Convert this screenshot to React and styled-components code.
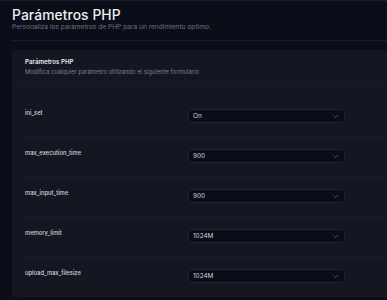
import React from 'react';
import styled, { createGlobalStyle } from 'styled-components';

const GlobalStyle = createGlobalStyle`
  html, body {
    margin: 0;
    padding: 0;
    background: #0b0d18;
    font-family: Inter, "Noto Sans", sans-serif;
    overflow: hidden;
  }
`;

const Page = styled.div`
  width: 387px;
  height: 300px;
  border-top: 1px solid #1b1e2b;
  padding-left: 12px;
  box-sizing: border-box;
  overflow: hidden;
`;

const Header = styled.div`
  padding-top: 6px;
`;

const Title = styled.h1`
  margin: 0;
  font-size: 13.8px;
  line-height: 16px;
  font-weight: 500;
  letter-spacing: 0.1px;
  color: #eef0f5;
`;

const Subtitle = styled.p`
  margin: 0;
  font-size: 6.6px;
  line-height: 9px;
  color: #6c7184;
`;

const Divider = styled.div`
  margin-top: 8px;
  border-top: 1px solid #1a1d29;
`;

const Card = styled.section`
  margin-top: 9px;
  width: 420px;
  background: #141722;
  border-radius: 4px 0 0 0;
`;

const CardHeader = styled.div`
  padding: 7px 13px 6px;
  border-bottom: 1px solid #191c28;
`;

const CardTitle = styled.h2`
  margin: 0;
  font-size: 6.2px;
  line-height: 9px;
  font-weight: 600;
  color: #e6e8ee;
`;

const CardText = styled.p`
  margin: 1px 0 0;
  font-size: 5.9px;
  line-height: 9px;
  color: #7a7f91;
`;

const CardBody = styled.div`
  padding: 14px 0 0 12px;
`;

const Row = styled.div`
  display: flex;
  align-items: flex-start;
  height: 40px;
  padding-top: 12px;
  box-sizing: border-box;
  border-bottom: 1px solid #191c28;
`;

const Label = styled.label`
  width: 163px;
  padding-left: 1px;
  font-size: 5.8px;
  line-height: 8px;
  font-weight: 500;
  color: #d3d5dd;
`;

const Select = styled.div`
  display: flex;
  align-items: center;
  justify-content: space-between;
  width: 157px;
  height: 14px;
  box-sizing: border-box;
  padding: 0 6px 0 4px;
  background: #0a0c17;
  border: 1px solid #1e2131;
  border-radius: 3px;
  font-size: 6.4px;
  color: #cfd1da;
`;

const Chevron = () => (
  <svg width="5" height="3" viewBox="0 0 10 6" fill="none">
    <path d="M1 1l4 4 4-4" stroke="#6c7082" strokeWidth="1.4" strokeLinecap="round" strokeLinejoin="round" />
  </svg>
);

const params = [
  { name: 'ini_set', value: 'On' },
  { name: 'max_execution_time', value: '900' },
  { name: 'max_input_time', value: '900' },
  { name: 'memory_limit', value: '1024M' },
  { name: 'upload_max_filesize', value: '1024M' },
];

const App = () => (
  <Page>
    <GlobalStyle />
    <Header>
      <Title>Parámetros PHP</Title>
      <Subtitle>Personaliza los parámetros de PHP para un rendimiento óptimo.</Subtitle>
    </Header>
    <Divider />
    <Card>
      <CardHeader>
        <CardTitle>Parámetros PHP</CardTitle>
        <CardText>Modifica cualquier parámetro utilizando el siguiente formulario</CardText>
      </CardHeader>
      <CardBody>
        {params.map((p) => (
          <Row key={p.name}>
            <Label>{p.name}</Label>
            <Select>
              <span>{p.value}</span>
              <Chevron />
            </Select>
          </Row>
        ))}
      </CardBody>
    </Card>
  </Page>
);

export default App;
